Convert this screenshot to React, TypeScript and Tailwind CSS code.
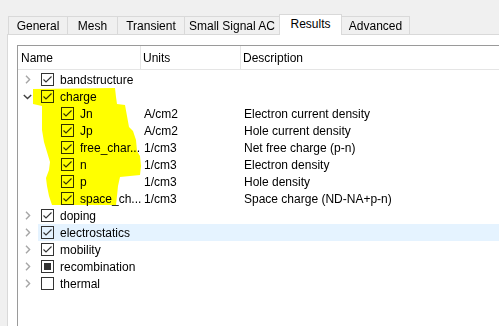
type Row = {
    name: string;
    units?: string;
    desc?: string;
    child?: boolean;
    state: 'checked' | 'empty' | 'mixed';
    expander?: 'collapsed' | 'expanded';
    selected?: boolean;
};

const rows: Row[] = [
    { name: 'bandstructure', state: 'checked', expander: 'collapsed' },
    { name: 'charge', state: 'checked', expander: 'expanded' },
    { name: 'Jn', units: 'A/cm2', desc: 'Electron current density', child: true, state: 'checked' },
    { name: 'Jp', units: 'A/cm2', desc: 'Hole current density', child: true, state: 'checked' },
    { name: 'free_char...', units: '1/cm3', desc: 'Net free charge (p-n)', child: true, state: 'checked' },
    { name: 'n', units: '1/cm3', desc: 'Electron density', child: true, state: 'checked' },
    { name: 'p', units: '1/cm3', desc: 'Hole density', child: true, state: 'checked' },
    { name: 'space_ch...', units: '1/cm3', desc: 'Space charge (ND-NA+p-n)', child: true, state: 'checked' },
    { name: 'doping', state: 'checked', expander: 'collapsed' },
    { name: 'electrostatics', state: 'checked', expander: 'collapsed', selected: true },
    { name: 'mobility', state: 'checked', expander: 'collapsed' },
    { name: 'recombination', state: 'mixed', expander: 'collapsed' },
    { name: 'thermal', state: 'empty', expander: 'collapsed' },
];

const tabs = [
    { label: 'General', w: 'w-[60px]' },
    { label: 'Mesh', w: 'w-[51px]' },
    { label: 'Transient', w: 'w-[68px]' },
    { label: 'Small Signal AC', w: 'w-[96px]' },
    { label: 'Results', w: 'w-[63px]', active: true },
    { label: 'Advanced', w: 'w-[69px]' },
];

function Checkbox({ state }: { state: Row['state'] }) {
    return (
        <div className="flex h-[13px] w-[13px] shrink-0 items-center justify-center border border-[#333333] bg-transparent">
            {state === 'checked' && (
                <svg width="11" height="11" viewBox="0 0 11 11">
                    <path d="M1.5 5.5 L4 8 L9.5 2.5" fill="none" stroke="#333333" strokeWidth="1.1" />
                </svg>
            )}
            {state === 'mixed' && <div className="h-[7px] w-[7px] bg-[#333333]" />}
        </div>
    );
}

function Expander({ kind }: { kind?: Row['expander'] }) {
    if (kind === 'collapsed')
        return (
            <svg width="6" height="9" viewBox="0 0 6 9" className="ml-[7px]">
                <path d="M1 0.8 L4.6 4.5 L1 8.2" fill="none" stroke="#a6a6a6" strokeWidth="1.4" />
            </svg>
        );
    if (kind === 'expanded')
        return (
            <svg width="9" height="6" viewBox="0 0 9 6" className="ml-[5px]">
                <path d="M0.8 1 L4.5 4.6 L8.2 1" fill="none" stroke="#404040" strokeWidth="1.4" />
            </svg>
        );
    return null;
}

function TreeRow({ row }: { row: Row }) {
    return (
        <div className="flex h-[17px] items-center">
            <div className="flex h-full w-[20px] shrink-0 items-center">
                <Expander kind={row.expander} />
            </div>
            <div className={`flex h-full flex-1 items-center ${row.selected ? 'bg-[#e5f3ff]' : ''}`}>
                <div
                    className={`flex w-[103px] shrink-0 items-center gap-[6px] overflow-hidden whitespace-nowrap ${
                        row.child ? 'pl-[23px]' : 'pl-[3px]'
                    }`}
                >
                    <Checkbox state={row.state} />
                    <span>{row.name}</span>
                </div>
                <div className="w-[100px] shrink-0 pl-[3px] whitespace-nowrap">{row.units}</div>
                <div className="flex-1 pl-[3px] whitespace-nowrap">{row.desc}</div>
            </div>
        </div>
    );
}

export default function App() {
    return (
        <div className="relative h-[326px] w-[499px] overflow-hidden bg-[#f0f0f0] pt-[14px] font-['Liberation_Sans',Arial,sans-serif] text-[12px] text-black">
            {/* tab strip */}
            <div className="flex h-[20px] items-end pl-[8px]">
                {tabs.map((t, i) => (
                    <div
                        key={t.label}
                        className={`flex shrink-0 items-center justify-center border border-b-0 border-[#d9d9d9] ${t.w} ${
                            i > 0 ? '-ml-px' : ''
                        } ${t.active ? 'relative z-10 -mb-px h-[21px] bg-white pb-[2px]' : 'h-[18px] bg-[#f0f0f0]'}`}
                    >
                        {t.label}
                    </div>
                ))}
            </div>

            {/* pane */}
            <div className="ml-[7px] h-full border-t border-l border-[#d9d9d9] bg-white pt-[10px] pl-[9px]">
                <div className="h-full border-t border-l border-[#9a9a9a]">
                    <div className="flex h-[24px] items-stretch border-b border-[#e5e5e5]">
                        <div className="flex w-[123px] shrink-0 items-center border-r border-[#e5e5e5] pl-[3px]">Name</div>
                        <div className="flex w-[100px] shrink-0 items-center border-r border-[#e5e5e5] pl-[2px]">Units</div>
                        <div className="flex flex-1 items-center pl-[2px]">Description</div>
                    </div>
                    <div className="pt-px">
                        {rows.map((r) => (
                            <TreeRow key={r.name} row={r} />
                        ))}
                    </div>
                </div>
            </div>

            {/* highlighter annotation */}
            <svg className="pointer-events-none absolute top-0 left-0 mix-blend-multiply" width="499" height="326">
                <polygon
                    fill="#ffff00"
                    points="33,89 115,88 116,97 117,104 125,105 127,116 129,127 133,131 136,140 137,151 140,156 141,166 140,175 120,177 118,186 117,196 116,205 52,205 49,196 47,186 46,178 49,170 50,162 47,152 44,142 42,130 42,118 42,106 33,104"
                />
            </svg>
        </div>
    );
}
